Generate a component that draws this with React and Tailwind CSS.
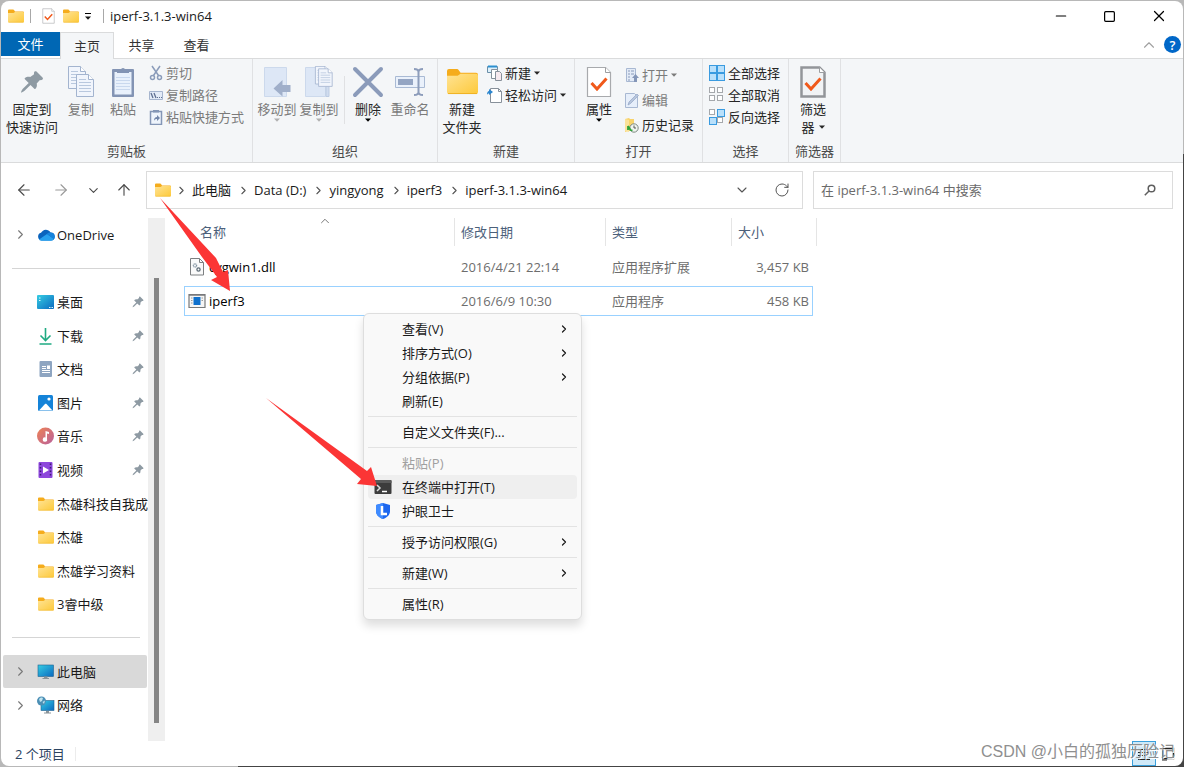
import React from "react";
import { ArrowLeft, ArrowRight, ArrowUp, ChevronDown, ChevronRight, ChevronUp, RotateCw, Minus, Square, X } from "lucide-react";

const Folder = ({ className }) => (
  <svg viewBox="0 0 32 28" preserveAspectRatio="none" className={className} aria-hidden="true">
    <defs>
      <linearGradient id="folderFront" x1="0" y1="0" x2="1" y2="1">
        <stop offset="0" stopColor="#ffe394" />
        <stop offset="1" stopColor="#fdc93a" />
      </linearGradient>
    </defs>
    <path d="M0 3a2 2 0 0 1 2-2h8a2 2 0 0 1 2 1l2 3h16a2 2 0 0 1 2 2v6H0z" fill="#f5ac1c" />
    <path d="M0 8h11l3-2h16a2 2 0 0 1 2 2v17a2 2 0 0 1-2 2H2a2 2 0 0 1-2-2z" fill="url(#folderFront)" />
    <path d="M1 26.5h30" stroke="#eeb021" />
  </svg>
);

const Pin = ({ className }) => (
  <svg viewBox="0 0 24 24" className={className} aria-hidden="true">
    <path
      d="M14.6 1.6c.6-.6 1.3-.6 1.9 0l6 6c.6.6.6 1.3 0 1.9-.8.6-1.7.8-2.6.6l-3.2 3.3c.5 2 .2 3.8-1.2 5.3-.4.4-.8.4-1.2 0l-3.8-3.8-6.2 6c-1 .8-2.6 1.4-3.3 1.6.2-.8.7-2.3 1.6-3.4l6.1-6.1-3.8-3.7c-.4-.4-.4-.8 0-1.2 1.5-1.4 3.3-1.7 5.3-1.2l3.9-2.7c-.3-1-.1-1.9.5-2.6z"
      fill="#8e9aa3"
    />
  </svg>
);

const Caret = ({ className }) => (
  <svg viewBox="0 0 6 4" className={className} width="6" height="4" fill="currentColor" aria-hidden="true">
    <path d="M0 .5h6L3 3.7z" />
  </svg>
);

const Page = ({ x = 0, y = 0 }) => (
  <g transform={`translate(${x} ${y})`} stroke="#a3b4cf">
    <path d="M.5.5h12l5 5v17H.5z" fill="#f1f5fc" />
    <path d="M12.5.5v5h5" fill="#fff" />
    <path d="M3 5.5h7M3 8.5h12M3 11.5h12M3 14.5h12M3 17.5h12" stroke="#b9c8de" />
  </g>
);

const CopyIcon = () => (
  <svg width="28" height="32" viewBox="0 0 28 32" aria-hidden="true">
    <Page x={1} y={0} />
    <Page x={9} y={8} />
  </svg>
);

const PasteIcon = () => (
  <svg width="24" height="32" viewBox="0 0 24 32" aria-hidden="true">
    <rect x="1" y="3" width="22" height="28" rx="1" fill="#8394b4" />
    <rect x="3.5" y="6" width="17" height="22.5" fill="#e9f1fc" />
    <path d="M6 7V4h4a2 2 0 0 1 4 0h4v3z" fill="#8394b4" />
    <path d="M5 11.5h14M5 14.5h14M5 17.5h14M5 20.5h14M5 23.5h14" stroke="#c9d8ee" />
  </svg>
);

const MoveToIcon = () => (
  <svg width="28" height="32" viewBox="0 0 28 32" aria-hidden="true">
    <path d="M1.5 1.5h22v29h-22z" fill="#dde7f6" stroke="#ccd9ec" />
    <path d="M27.5 19v7h-8v4.5l-9-8 9-8.5v5z" fill="#a0afca" />
  </svg>
);

const CopyToIcon = () => (
  <svg width="30" height="32" viewBox="0 0 30 32" aria-hidden="true">
    <path d="M1.5 1.5h20v29h-20z" fill="#dde7f6" stroke="#ccd9ec" />
    <path d="M22 20v10.5h3V20z" fill="#d0dcef" stroke="#bccbe2" />
    <g transform="translate(11 0) scale(.8)">
      <Page />
      <Page x={4} y={3} />
    </g>
  </svg>
);

const DeleteIcon = () => (
  <svg width="32" height="32" viewBox="0 0 32 32" aria-hidden="true">
    <path d="M3 3l26 26M29 3L3 29" stroke="#8b9bba" strokeWidth="4" strokeLinecap="round" />
  </svg>
);

const RenameIcon = () => (
  <svg width="32" height="32" viewBox="0 0 32 32" aria-hidden="true">
    <path d="M1.5 10.5h29v11h-29z" fill="#eaf1fb" stroke="#a9bad4" />
    <path d="M4 13h15v6H4z" fill="#94a5c3" />
    <path d="M20 3c3 0 4.5 1 4.5 3v20c0 2-1.5 3-4.5 3M29 3c-3 0-4.5 1-4.5 3v20c0 2 1.5 3 4.5 3" fill="none" stroke="#8d9dbb" strokeWidth="2" />
  </svg>
);

const CheckPage = ({ className, heavy }) => (
  <svg viewBox="0 0 26 32" className={className} aria-hidden="true">
    <path d="M1.5 1.5h18l5 5v24h-23z" fill={heavy ? "#f1f3f5" : "#fff"} stroke={heavy ? "#929599" : "#a8aaad"} strokeWidth={heavy ? 2.5 : 1.2} />
    <path d="M19.5 1.5v5h5" fill="#fff" stroke="#9c9ea1" />
    <path d="M5.5 17l5.5 6 9.5-10.5" fill="none" stroke="#f0591b" strokeWidth="3" />
  </svg>
);

const CutIcon = () => (
  <svg width="14" height="16" viewBox="0 0 14 16" fill="none" stroke="#8b9cba" strokeWidth="1.5" aria-hidden="true">
    <path d="M3 1l6.5 9.5M11 1l-6.5 9.5" />
    <circle cx="3.5" cy="12.5" r="2" />
    <circle cx="10.5" cy="12.5" r="2" />
  </svg>
);

const PathIcon = () => (
  <svg width="14" height="16" viewBox="0 0 14 16" aria-hidden="true">
    <path d="M.5 4.5h13v8H.5z" fill="#e3ebf7" stroke="#a6b5ce" />
    <path d="M2 6l2 5M5 6l2 5" stroke="#5f7092" strokeWidth="1.3" />
    <path d="M8 10.5h1M10 10.5h1M12 10.5h1" stroke="#5f7092" />
  </svg>
);

const ShortcutIcon = () => (
  <svg width="14" height="16" viewBox="0 0 14 16" aria-hidden="true">
    <path d="M1.5 2.5h11v13h-11z" fill="#eef4fc" stroke="#8496b6" strokeWidth="1.5" />
    <path d="M4 1h6v2.5H4z" fill="#8496b6" />
    <path d="M5 12c0-3 1-4 3-4V6l3 3-3 3v-2c-1.5 0-2.5.5-3 2zM5 6h4" fill="#7286aa" />
  </svg>
);

const NewItemIcon = () => (
  <svg width="15" height="16" viewBox="0 0 15 16" aria-hidden="true">
    <path d="M.5 1.5h10v6H.5z" fill="#dff0fa" stroke="#6a8fa8" />
    <path d="M1 1.5h9" stroke="#2b8fcf" strokeWidth="2" />
    <path d="M4.5 4.5h6v9h-6z" fill="#fff" stroke="#87909a" />
    <path d="M8.5 6.5h4l2 2v7h-6z" fill="#f7e9ee" stroke="#87909a" />
  </svg>
);

const EasyAccessIcon = () => (
  <svg width="15" height="16" viewBox="0 0 15 16" aria-hidden="true">
    <path d="M3.5 1.5h8l3 3v11h-11z" fill="#fff" stroke="#87909a" />
    <path d="M11.5 1.5v3h3" fill="none" stroke="#87909a" />
    <path d="M0 8c0-3 1-4 2-4V2l4 3-4 3V6.5C1 6.5.5 7 0 8z" fill="#2b86cf" />
  </svg>
);

const OpenIcon = () => (
  <svg width="14" height="16" viewBox="0 0 14 16" aria-hidden="true">
    <path d="M1.5 1.5h9v13h-9z" fill="#e3ebf7" stroke="#a8b8d2" />
    <path d="M3 4h2M3 7h2M3 10h2M3 13h2M6 4h3M6 7h3" stroke="#8a9bbb" />
    <path d="M10.5 7l3.5 4h-2v4H9v-4H7z" fill="#8496b8" />
  </svg>
);

const EditIcon = () => (
  <svg width="14" height="16" viewBox="0 0 14 16" aria-hidden="true">
    <path d="M.5 1.5h9l3 3v11H.5z" fill="#e6eefa" stroke="#a8b8d2" />
    <path d="M3 13l1-3 8-8 1.5 1.5-8 8z" fill="#b7c6dd" stroke="#93a5c4" strokeWidth=".7" />
  </svg>
);

const HistoryIcon = () => (
  <svg width="14" height="16" viewBox="0 0 14 16" aria-hidden="true">
    <path d="M0 2l4-1 1 1h4v12H3l-3 1z" fill="#f8d36b" />
    <path d="M0 2l4 1v12l-4-1z" fill="#fbe29a" />
    <circle cx="9" cy="11" r="4.2" fill="#eef3ee" stroke="#7e8a84" />
    <path d="M9 8.5V11h2" fill="none" stroke="#555" />
    <path d="M3 9l2.5 4 2 .5M3 9v4" fill="none" stroke="#2fa43a" strokeWidth="1.8" />
  </svg>
);

// the fill of each of the four squares tells the three selection icons apart
const SelectIcon = ({ on }) => (
  <svg width="16" height="16" viewBox="0 0 16 16" aria-hidden="true">
    {[[0.5, 0.5], [8.5, 0.5], [0.5, 8.5], [8.5, 8.5]].map(([x, y], i) => (
      <rect
        key={i}
        x={x}
        y={y}
        width={on[i] ? 7 : 5}
        height={on[i] ? 7 : 5}
        fill={on[i] ? "#b9e0fb" : "#fff"}
        stroke={on[i] ? "#3a9be0" : "#a5a8ac"}
      />
    ))}
  </svg>
);

const CloudIcon = () => (
  <svg width="18" height="18" viewBox="0 0 18 18" aria-hidden="true">
    <path d="M4.5 14.5A4 4 0 0 1 4 6.7 5.5 5.5 0 0 1 13.5 6.5 4 4 0 0 1 14 14.5z" fill="#0a63bd" />
    <path d="M2 13.5L10 8l7 5a3.5 3.5 0 0 1-3 1.7H4.5c-1 0-2-.4-2.5-1.2z" fill="#27a0ee" />
    <path d="M10 8c1.5-2 6-2 7.3 1 .7 1.5.5 3-.3 4z" fill="#1583dc" />
  </svg>
);

const DesktopIcon = () => (
  <svg width="18" height="18" viewBox="0 0 18 18" aria-hidden="true">
    <defs>
      <linearGradient id="screen" x1="0" y1="0" x2="1" y2="1">
        <stop offset="0" stopColor="#35cde3" />
        <stop offset="1" stopColor="#0b69c0" />
      </linearGradient>
    </defs>
    <rect y="2" width="17" height="14" rx="1" fill="url(#screen)" />
    <path d="M2 5h1.5M2 7.5h1.5M12 14.5h1.5M14.5 14.5H16" stroke="#d9f6fb" />
  </svg>
);

const DownloadIcon = () => (
  <svg width="18" height="18" viewBox="0 0 18 18" fill="none" stroke="#1faa82" strokeWidth="1.6" aria-hidden="true">
    <path d="M8.5 1v12M3.5 8.5l5 5 5-5M2.5 17h12" />
  </svg>
);

const DocumentIcon = () => (
  <svg width="18" height="18" viewBox="0 0 18 18" aria-hidden="true">
    <rect x="2.5" y="1" width="12.5" height="16" rx="1" fill="#8ea5c1" />
    <path d="M5 6.5h4M5 8.5h4M5 12.5h8M5 10.5h8" stroke="#fff" />
    <path d="M10 5.5h3V9h-3z" fill="#fff" />
  </svg>
);

const PictureIcon = () => (
  <svg width="18" height="18" viewBox="0 0 18 18" aria-hidden="true">
    <rect x="1" y="1" width="15" height="16" rx="1.5" fill="#1583d8" />
    <path d="M2 16.5L8 10c.5-.5 1-.5 1.5 0l6 6.5z" fill="#fff" />
    <circle cx="12" cy="5" r="1.6" fill="#fff" />
  </svg>
);

const MusicIcon = () => (
  <svg width="18" height="18" viewBox="0 0 18 18" aria-hidden="true">
    <defs>
      <linearGradient id="disc" x1="0" y1="0" x2="1" y2="1">
        <stop offset="0" stopColor="#ee8254" />
        <stop offset="1" stopColor="#b9619d" />
      </linearGradient>
    </defs>
    <circle cx="8.5" cy="9" r="8.5" fill="url(#disc)" />
    <path d="M8.5 10.5V4L12 5v2l-2-.5V12a2.2 2.2 0 1 1-1.5-1.5z" fill="#fff" />
  </svg>
);

const VideoIcon = () => (
  <svg width="18" height="18" viewBox="0 0 18 18" aria-hidden="true">
    <rect x="1.5" y="1" width="14" height="16" rx="1" fill="#8d47dc" />
    <path d="M3.5 2.5v14M13.5 2.5v14" stroke="#3d1c72" strokeWidth="1.5" strokeDasharray="1.5 2" />
    <path d="M6 5.5L12 9l-6 3.5z" fill="#fff" />
  </svg>
);

const ComputerIcon = () => (
  <svg width="18" height="18" viewBox="0 0 18 18" aria-hidden="true">
    <rect x="1" y="2" width="15.5" height="11.5" fill="url(#screen)" stroke="#20618e" strokeWidth=".6" />
    <path d="M7 13.5h3.5V15H12v1H5.5v-1H7z" fill="#8a9399" />
  </svg>
);

const NetworkIcon = () => (
  <svg width="18" height="18" viewBox="0 0 18 18" aria-hidden="true">
    <rect x="4" y="4.5" width="13" height="10" fill="url(#screen)" stroke="#20618e" strokeWidth=".6" />
    <path d="M9 15h3v1.5h2v1H7v-1h2z" fill="#8a9399" />
    <circle cx="4.5" cy="5" r="4.5" fill="#4c8fb5" />
    <path d="M2 3c1-1.5 3-2 4-1L5 5 3 6zM5.5 6L8 4.5 7 8z" fill="#bfe3ee" />
  </svg>
);

const DllIcon = () => (
  <svg width="18" height="18" viewBox="0 0 18 18" aria-hidden="true">
    <path d="M2.5.5h9l4 4V17h-13z" fill="#fafafa" stroke="#7d8082" />
    <path d="M11.5.5v4h4" fill="none" stroke="#7d8082" />
    <circle cx="7" cy="7.5" r="1.6" fill="none" stroke="#8394a2" strokeWidth="1.3" strokeDasharray="1 .4" />
    <circle cx="10.5" cy="11.5" r="1.6" fill="none" stroke="#5d6b76" strokeWidth="1.3" />
  </svg>
);

const ExeIcon = () => (
  <svg width="18" height="18" viewBox="0 0 18 18" aria-hidden="true">
    <path d="M1 2.5h16v13H1z" fill="#f5f5f5" stroke="#77797b" strokeWidth="1.2" />
    <path d="M1 3h16" stroke="#77797b" strokeWidth="1.5" />
    <path d="M5.5 5h7v8h-7z" fill="#0e70cd" />
    <path d="M3 6h1.5M3 8.5h1.5M3 11h1.5M13.5 6H15M13.5 8.5H15" stroke="#9a9c9e" />
  </svg>
);

const TerminalIcon = () => (
  <svg width="18" height="14" viewBox="0 0 18 14" aria-hidden="true">
    <rect x=".5" width="17" height="14" rx="1" fill="#3c3c3c" />
    <path d="M.5 1a1 1 0 0 1 1-1h15a1 1 0 0 1 1 1v2H.5z" fill="#5a5a5a" />
    <path d="M3 5l3 3-3 3" fill="none" stroke="#ddd" strokeWidth="1.5" />
    <path d="M8 11.5h5" stroke="#fff" strokeWidth="1.5" />
  </svg>
);

const ShieldIcon = () => (
  <svg width="18" height="16" viewBox="0 0 18 16" aria-hidden="true">
    <path d="M9 0l7 2v6c0 4-3 6.5-7 8-4-1.5-7-4-7-8V2z" fill="#1d67ee" />
    <path d="M9 0L2 2v6c0 4 3 6.5 7 8z" fill="#3f8bff" />
    <path d="M8 3v8h5" fill="none" stroke="#fff" strokeWidth="2.5" />
  </svg>
);

const SearchIcon = () => (
  <svg width="12" height="12" viewBox="0 0 12 12" fill="none" stroke="#5f5f5f" strokeWidth="1.5" aria-hidden="true">
    <circle cx="7.5" cy="4.5" r="3.3" />
    <path d="M5 7L.8 11.2" />
  </svg>
);

const BigButton = ({ icon, lines, muted, caret, inlineCaret, wide }) => (
  <button className={`flex flex-col items-center leading-[18px] ${wide ? "w-14" : "w-[42px]"} ${muted ? "text-[#7b7b7b]" : "text-[#262626]"}`}>
    <span className="flex h-[34px] items-start justify-center">{icon}</span>
    {lines.map((line) => (
      <span key={line} className="flex items-center gap-1 whitespace-nowrap">
        {line}
        {inlineCaret && line === lines[lines.length - 1] && <Caret />}
      </span>
    ))}
    {caret && <Caret className={muted ? "text-[#b0b0b0]" : "text-black"} />}
  </button>
);

const SmallButton = ({ icon, label, muted, caret }) => (
  <button className={`flex items-center gap-[3px] whitespace-nowrap ${muted ? "text-[#7b7b7b]" : "text-[#262626]"}`}>
    {icon}
    {label}
    {caret && <Caret />}
  </button>
);

const Group = ({ label, children, className }) => (
  <section aria-label={label} className={`flex shrink-0 flex-col border-r border-[#e0e1e3] pt-[7px] ${className}`}>
    <div className="flex flex-1 items-start pl-[3px]">{children}</div>
    <div className="pb-0.5 text-center leading-[18px] text-[#4a4a4a]">{label}</div>
  </section>
);

const crumbs = ["此电脑", "Data (D:)", "yingyong", "iperf3", "iperf-3.1.3-win64"];

const places = [
  { label: "OneDrive", icon: <CloudIcon />, expand: true },
  { divider: true },
  { label: "桌面", icon: <DesktopIcon />, pinned: true },
  { label: "下载", icon: <DownloadIcon />, pinned: true },
  { label: "文档", icon: <DocumentIcon />, pinned: true },
  { label: "图片", icon: <PictureIcon />, pinned: true },
  { label: "音乐", icon: <MusicIcon />, pinned: true },
  { label: "视频", icon: <VideoIcon />, pinned: true },
  { label: "杰雄科技自我成", icon: <Folder className="h-3.5 w-4" /> },
  { label: "杰雄", icon: <Folder className="h-3.5 w-4" /> },
  { label: "杰雄学习资料", icon: <Folder className="h-3.5 w-4" /> },
  { label: "3睿中级", icon: <Folder className="h-3.5 w-4" /> },
  { divider: true },
  { label: "此电脑", icon: <ComputerIcon />, expand: true, selected: true },
  { label: "网络", icon: <NetworkIcon />, expand: true },
];

const files = [
  { name: "cygwin1.dll", icon: <DllIcon />, date: "2016/4/21 22:14", type: "应用程序扩展", size: "3,457 KB" },
  { name: "iperf3", icon: <ExeIcon />, date: "2016/6/9 10:30", type: "应用程序", size: "458 KB", focused: true },
];

const menu = [
  [
    { label: "查看(V)", sub: true },
    { label: "排序方式(O)", sub: true },
    { label: "分组依据(P)", sub: true },
    { label: "刷新(E)" },
  ],
  [{ label: "自定义文件夹(F)..." }],
  [
    { label: "粘贴(P)", disabled: true },
    { label: "在终端中打开(T)", icon: <TerminalIcon />, active: true },
    { label: "护眼卫士", icon: <ShieldIcon /> },
  ],
  [{ label: "授予访问权限(G)", sub: true }],
  [{ label: "新建(W)", sub: true }],
  [{ label: "属性(R)" }],
];

function TitleBar() {
  return (
    <header className="flex h-[30px] items-center pl-[7px]">
      <Folder className="h-3.5 w-4" />
      <span className="mx-1.5 h-3.5 w-px bg-[#a8a8a8]" />
      <button aria-label="属性" className="ml-[5px]">
        <CheckPage className="h-4 w-[13px]" />
      </button>
      <button aria-label="新建文件夹" className="ml-2">
        <Folder className="h-3.5 w-4" />
      </button>
      <button aria-label="自定义快速访问工具栏" className="ml-1.5 flex flex-col items-center gap-0.5">
        <span className="h-px w-1.5 bg-black" />
        <Caret />
      </button>
      <span className="mr-1.5 ml-3 h-3.5 w-px bg-[#a8a8a8]" />
      <h1>iperf-3.1.3-win64</h1>
      <div className="ml-auto flex items-center text-black">
        <button aria-label="最小化" className="flex w-[49px] justify-center"><Minus size={16} strokeWidth={1.8} /></button>
        <button aria-label="最大化" className="flex w-[49px] justify-center"><Square size={13} strokeWidth={2.2} /></button>
        <button aria-label="关闭" className="flex w-[49px] justify-center"><X size={18} strokeWidth={1.6} /></button>
      </div>
    </header>
  );
}

function Tabs() {
  return (
    <nav className="flex h-7 items-stretch border-b border-[#dadbdc] text-[#333]">
      <button className="mt-px mb-0.5 w-[59px] bg-[#0067b4] text-white">文件</button>
      <button className="mt-px -mb-px w-[54px] border border-b-0 border-[#dadbdc] bg-[#f4f6f8]">主页</button>
      <button className="w-[55px]">共享</button>
      <button className="w-[55px]">查看</button>
      <div className="ml-auto flex items-center gap-1.5 pr-0.5">
        <button aria-label="最小化功能区" className="text-[#a0a0a0]"><ChevronUp size={18} strokeWidth={1.5} /></button>
        <button aria-label="帮助" className="flex size-[17px] items-center justify-center rounded-full bg-[#0067c8] font-semibold text-white">?</button>
      </div>
    </nav>
  );
}

function Ribbon() {
  return (
    <div className="flex h-[104px] border-b border-[#dadbdc] bg-[#f4f6f8]">
      <Group label="剪贴板" className="w-[252px]">
        <BigButton wide icon={<Pin className="mt-1 size-6" />} lines={["固定到", "快速访问"]} />
        <BigButton muted icon={<CopyIcon />} lines={["复制"]} />
        <BigButton muted icon={<PasteIcon />} lines={["粘贴"]} />
        <div className="-mt-1 grid auto-rows-[22px] pl-[5px]">
          <SmallButton muted icon={<CutIcon />} label="剪切" />
          <SmallButton muted icon={<PathIcon />} label="复制路径" />
          <SmallButton muted icon={<ShortcutIcon />} label="粘贴快捷方式" />
        </div>
      </Group>
      <Group label="组织" className="w-[185px]">
        <BigButton muted caret icon={<MoveToIcon />} lines={["移动到"]} />
        <BigButton muted caret icon={<CopyToIcon />} lines={["复制到"]} />
        <span className="mt-2.5 mr-0.5 ml-1 h-12 w-px bg-[#e0e1e3]" />
        <BigButton caret icon={<DeleteIcon />} lines={["删除"]} />
        <BigButton muted icon={<RenameIcon />} lines={["重命名"]} />
      </Group>
      <Group label="新建" className="w-[137px]">
        <BigButton icon={<Folder className="mt-0.5 h-[27px] w-[31px]" />} lines={["新建", "文件夹"]} />
        <div className="-mt-1 grid auto-rows-[22px] pl-1">
          <SmallButton caret icon={<NewItemIcon />} label="新建" />
          <SmallButton caret icon={<EasyAccessIcon />} label="轻松访问" />
        </div>
      </Group>
      <Group label="打开" className="w-32">
        <BigButton caret icon={<CheckPage className="h-8 w-[26px]" />} lines={["属性"]} />
        <div className="-mt-1 grid auto-rows-[25px] pl-[5px]">
          <SmallButton muted caret icon={<OpenIcon />} label="打开" />
          <SmallButton muted icon={<EditIcon />} label="编辑" />
          <SmallButton icon={<HistoryIcon />} label="历史记录" />
        </div>
      </Group>
      <Group label="选择" className="w-[86px]">
        <div className="-mt-1 grid auto-rows-[22px] pl-[3px]">
          <SmallButton icon={<SelectIcon on={[1, 1, 1, 1]} />} label="全部选择" />
          <SmallButton icon={<SelectIcon on={[0, 0, 0, 0]} />} label="全部取消" />
          <SmallButton icon={<SelectIcon on={[0, 1, 1, 0]} />} label="反向选择" />
        </div>
      </Group>
      <Group label="筛选器" className="w-[52px]">
        <BigButton inlineCaret icon={<CheckPage heavy className="h-8 w-[26px]" />} lines={["筛选", "器"]} />
      </Group>
    </div>
  );
}

function AddressRow() {
  return (
    <div className="flex items-center gap-2.5 px-2.5 pt-2 pb-[9px]">
      <div className="flex w-[125px] shrink-0 items-center pl-1 text-[#4a4a4a]">
        <button aria-label="后退"><ArrowLeft size={18} strokeWidth={1.5} /></button>
        <button aria-label="前进" className="ml-[19px] text-[#999]"><ArrowRight size={18} strokeWidth={1.5} /></button>
        <button aria-label="最近浏览的位置" className="ml-4"><ChevronDown size={15} strokeWidth={1.8} /></button>
        <button aria-label="向上" className="ml-3.5"><ArrowUp size={18} strokeWidth={1.5} /></button>
      </div>
      <div className="flex h-[38px] min-w-0 flex-1 items-center border border-[#dcdcdc] pl-2">
        <Folder className="mr-0.5 h-3.5 w-4" />
        {crumbs.map((crumb) => (
          <React.Fragment key={crumb}>
            <ChevronRight size={13} strokeWidth={2} className="mx-0.5 text-[#555]" />
            <button className="mr-1 ml-0.5 whitespace-nowrap">{crumb}</button>
          </React.Fragment>
        ))}
        <button aria-label="以前的位置" className="ml-auto text-[#555]"><ChevronDown size={16} strokeWidth={1.6} /></button>
        <button aria-label="刷新" className="mr-3 ml-6 text-[#555]"><RotateCw size={16} strokeWidth={1.5} /></button>
      </div>
      <label className="flex h-[38px] w-[360px] items-center border border-[#dcdcdc] pr-4 pl-[7px]">
        <input
          type="search"
          aria-label="搜索"
          placeholder="在 iperf-3.1.3-win64 中搜索"
          className="min-w-0 flex-1 outline-none placeholder:text-[#6b6b6b]"
        />
        <SearchIcon />
      </label>
    </div>
  );
}

function Sidebar() {
  return (
    <aside className="flex w-[164px] shrink-0">
      <ul className="grid flex-1 auto-rows-fr pb-[19px] pl-0.5">
        {places.map((place, i) =>
          place.divider ? (
            <li key={i} className="flex items-center pr-2 pl-[9px]">
              <hr className="w-full border-[#d5d5d5]" />
            </li>
          ) : (
            <li key={i} className={`flex min-h-[33px] items-center rounded-xs whitespace-nowrap ${place.selected ? "mr-px bg-[#d9d9d9]" : ""}`}>
              <span className="flex w-[34px] shrink-0 justify-center">
                {place.expand && <ChevronRight size={15} strokeWidth={1.8} className="text-[#7a7a7a]" />}
              </span>
              <button className="flex items-center gap-0.5">
                <span className="flex w-[18px] justify-center">{place.icon}</span>
                {place.label}
              </button>
              {place.pinned && <Pin className="mr-1 ml-auto size-3" />}
            </li>
          )
        )}
      </ul>
      <div className="flex w-[17px] flex-col bg-[#efefef] pt-[60px] pb-[18px] pl-1.5">
        <div className="w-[5px] flex-1 bg-[#858585]" />
      </div>
    </aside>
  );
}

function FileTable() {
  return (
    <table className="-mt-1 ml-[19px] w-[629px] table-fixed border-separate border-spacing-x-0 border-spacing-y-1 text-left">
      <colgroup>
        <col />
        <col className="w-[151px]" />
        <col className="w-[126px]" />
        <col className="w-[81px]" />
      </colgroup>
      <thead>
        <tr className="h-[30px] align-top text-[#4c607a]">
          <th className="relative p-0 font-normal">
            <div className="flex h-7 items-center border-r border-[#e5e5e5] pl-4">名称</div>
            <ChevronUp size={14} strokeWidth={1.5} className="absolute -top-1 left-1/2 -translate-x-0.5 text-[#666]" />
          </th>
          <th className="p-0 font-normal"><div className="flex h-7 items-center border-r border-[#e5e5e5] pl-1.5">修改日期</div></th>
          <th className="p-0 font-normal"><div className="flex h-7 items-center border-r border-[#e5e5e5] pl-1.5">类型</div></th>
          <th className="p-0 font-normal"><div className="-mr-1 flex h-7 items-center border-r border-[#e5e5e5] pl-1.5">大小</div></th>
        </tr>
      </thead>
      <tbody>
        {files.map((file) => (
          <tr key={file.name} className={`h-[30px] text-[#6d6d6d] ${file.focused ? "outline outline-1 -outline-offset-1 outline-[#99d1ff]" : ""}`}>
            <td className="p-0 pl-1 text-black">
              <div className="flex items-center gap-[3px]">
                {file.icon}
                {file.name}
              </div>
            </td>
            <td className="p-0 pl-1.5">{file.date}</td>
            <td className="p-0 pl-1.5">{file.type}</td>
            <td className="p-0 pr-1 text-right">{file.size}</td>
          </tr>
        ))}
      </tbody>
    </table>
  );
}

function ContextMenu() {
  return (
    <div role="menu" className="absolute top-[95px] left-[198px] w-[219px] rounded-md border border-[#dedede] bg-[#f9f9f9] px-1 py-[3px] shadow-[0_6px_10px_rgba(0,0,0,0.13)]">
      {menu.map((section, i) => (
        <div key={i} className={i > 0 ? "mt-[3px] border-t border-[#e3e3e3] pt-[3px]" : ""}>
          {section.map((item) => (
            <button
              key={item.label}
              role="menuitem"
              disabled={item.disabled}
              className={`flex h-6 w-full items-center rounded pr-[7px] pl-1.5 disabled:text-[#a0a0a0] ${item.active ? "bg-[#efefef]" : ""}`}
            >
              <span className="w-7 shrink-0">{item.icon}</span>
              {item.label}
              {item.sub && <ChevronRight size={12} strokeWidth={2.4} className="ml-auto" />}
            </button>
          ))}
        </div>
      ))}
    </div>
  );
}

function StatusBar() {
  return (
    <footer className="flex h-[25px] items-center pl-3.5 text-[#2b4361]">
      <span className="pr-2.5">2 个项目</span>
      <span className="h-3.5 w-px bg-[#ececec]" />
      <div className="relative ml-auto flex self-stretch pr-[3px] text-[#222]">
        <button aria-label="详细信息" className="flex w-6 items-center justify-center border border-[#3aa0dc] bg-[#cfe9f8]">
          <svg width="14" height="14" viewBox="0 0 14 14" stroke="currentColor" aria-hidden="true">
            <path d="M1 2.5h12M1 5.5h12M1 8.5h12" strokeDasharray="5 1" />
            <path d="M1 12.5h12" />
          </svg>
        </button>
        <button aria-label="大缩略图" className="flex w-6 items-center justify-center">
          <svg width="14" height="14" viewBox="0 0 14 14" fill="none" stroke="currentColor" strokeWidth="1.5" aria-hidden="true">
            <path d="M2 1.5h10.5v10H2z" />
            <path d="M1 13h5" strokeWidth="1" />
          </svg>
        </button>
        <span className="pointer-events-none absolute right-2 bottom-0.5 font-['Liberation_Sans','Noto_Sans_CJK_SC',sans-serif] text-base whitespace-nowrap text-[#8f8f8f] [text-shadow:1px_1px_0_#fff]">
          CSDN @小白的孤独历险记
        </span>
      </div>
    </footer>
  );
}

function Arrows() {
  return (
    <svg className="pointer-events-none absolute top-0 left-0" width="400" height="500" fill="#fb3535" aria-hidden="true">
      <path d="M159 197L215 257L222 271L227 269L229 290L210 279L216 276L201 256z" />
      <path d="M265 397L366 470L370 466L376 485L356 483L360 478z" />
    </svg>
  );
}

export default function App() {
  return (
    <div className="flex min-h-screen bg-[linear-gradient(to_bottom_right,#b8b8b8_60%,#444_60%)] p-px font-['Open_Sans','Noto_Sans_CJK_SC',sans-serif] text-[13px] leading-[18px] text-[#1a1a1a]">
      <div className="relative flex min-w-0 flex-1 flex-col overflow-hidden rounded-lg bg-white">
        <TitleBar />
        <Tabs />
        <Ribbon />
        <AddressRow />
        <div className="flex flex-1">
          <Sidebar />
          <main className="relative min-w-0 flex-1">
            <FileTable />
            <ContextMenu />
          </main>
        </div>
        <StatusBar />
        <Arrows />
      </div>
    </div>
  );
}
